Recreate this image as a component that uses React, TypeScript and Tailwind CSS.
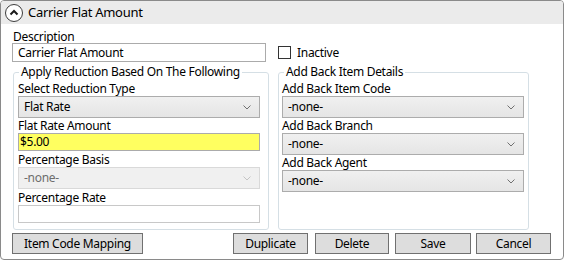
import React from "react";

const font = { fontFamily: '"Noto Sans", "Open Sans", sans-serif' };

function Chevron({ disabled }: { disabled?: boolean }) {
  return (
    <svg width="8" height="5" viewBox="0 0 8 5" className="shrink-0">
      <path d="M0.5 0.5 L4 4 L7.5 0.5" fill="none" stroke={disabled ? "#c4c4c4" : "#707070"} strokeWidth="1" />
    </svg>
  );
}

function Combo({ value, disabled }: { value: string; disabled?: boolean }) {
  return (
    <div
      className={`h-[22px] flex items-center justify-between pl-[5px] pr-[8px] border ${
        disabled ? "border-[#d9d9d9] bg-[#f0f0f0] text-[#6d6d6d]" : "border-[#acacac] bg-[linear-gradient(#f0f0f0,#e5e5e5)] text-black"
      }`}
    >
      <span className="text-[12px] leading-none">{value}</span>
      <Chevron disabled={disabled} />
    </div>
  );
}

function Label({ children }: { children: React.ReactNode }) {
  return <div className="text-[12px] leading-[14px] h-[14px] text-black">{children}</div>;
}

function Button({ children, w }: { children: React.ReactNode; w: string }) {
  return (
    <div className={`${w} h-[21px] flex items-center justify-center border border-[#707070] bg-[#dddddd] text-[12px] text-black`}>
      {children}
    </div>
  );
}

export default function App() {
  return (
    <div style={font} className="w-[564px] h-[260px] bg-white text-black tracking-[-0.3px]">
      <div className="w-[564px] h-[260px] border border-[#8a8a8a] rounded-[4px] overflow-hidden flex flex-col">
        <div className="h-[23px] bg-[#ebebeb] flex items-center pl-[4px] shrink-0">
          <div className="w-[18px] h-[18px] rounded-full border-[1.5px] border-[#3c3c3c] flex items-center justify-center bg-white">
            <svg width="10" height="7" viewBox="0 0 10 7">
              <path d="M1.5 5.5 L5 2 L8.5 5.5" fill="none" stroke="#1a1a1a" strokeWidth="2" />
            </svg>
          </div>
          <span className="ml-[5px] text-[13px]">Carrier Flat Amount</span>
        </div>
        <div className="flex-1 pl-[11px] pr-[11px] pt-[6px] flex flex-col">
          <div className="pl-[1px]"><Label>Description</Label></div>
          <div className="flex items-center mt-[-1px]">
            <div className="w-[254px] h-[19px] border border-[#ababab] flex items-center pl-[5px] text-[12px]">Carrier Flat Amount</div>
            <div className="ml-[12px] w-[13px] h-[13px] border border-[#333]" />
            <span className="ml-[6px] text-[12px]">Inactive</span>
          </div>
          <div className="flex mt-[10px] ml-[1px] gap-[9px]">
            <div className="relative w-[256px] h-[158px] border border-[#d5dfe5] rounded-[3px] pl-[4px] pr-[8px] pt-[9px]">
              <div className="absolute left-[5px] top-[-8px] bg-white px-[2px] text-[12px] leading-[14px]">Apply Reduction Based On The Following</div>
              <Label>Select Reduction Type</Label>
              <Combo value="Flat Rate" />
              <div className="mt-[1px]"><Label>Flat Rate Amount</Label></div>
              <div className="h-[18px] border border-[#ababab] bg-[#ffff60] flex items-center pl-[1px] text-[12px]">$5.00</div>
              <div className="mt-[2px]"><Label>Percentage Basis</Label></div>
              <Combo value="-none-" disabled />
              <div className="mt-[2px]"><Label>Percentage Rate</Label></div>
              <div className="h-[18px] border border-[#c8c8c8]" />
            </div>
            <div className="relative w-[251px] h-[158px] border border-[#d5dfe5] rounded-[3px] pl-[3px] pr-[4px] pt-[9px]">
              <div className="absolute left-[5px] top-[-8px] bg-white px-[2px] text-[12px] leading-[14px]">Add Back Item Details</div>
              <Label>Add Back Item Code</Label>
              <Combo value="-none-" />
              <div className="mt-[1px]"><Label>Add Back Branch</Label></div>
              <Combo value="-none-" />
              <div className="mt-[1px]"><Label>Add Back Agent</Label></div>
              <Combo value="-none-" />
            </div>
          </div>
          <div className="flex mt-[3px]">
            <Button w="w-[131px]">Item Code Mapping</Button>
            <div className="flex-1" />
            <div className="flex mr-[1px]">
              <Button w="w-[75px]">Duplicate</Button>
              <div className="w-[7px]" />
              <Button w="w-[74px]">Delete</Button>
              <div className="w-[6px]" />
              <Button w="w-[76px]">Save</Button>
              <div className="w-[5px]" />
              <Button w="w-[75px]">Cancel</Button>
            </div>
          </div>
        </div>
      </div>
    </div>
  );
}
